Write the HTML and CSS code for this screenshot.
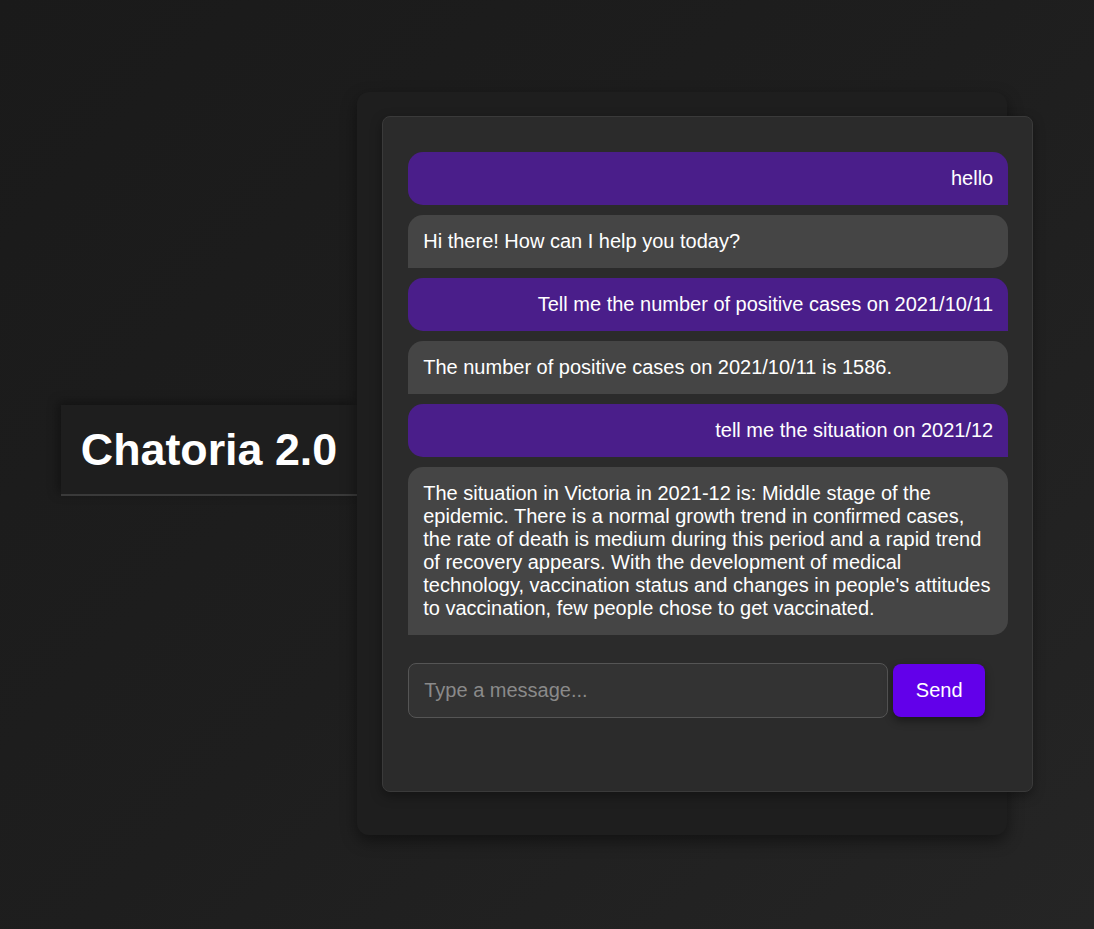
FILE: index.html
```html
<!DOCTYPE html>
<html lang="en">
<head>
<meta charset="utf-8">
<title>Chatoria 2.0</title>
<link rel="stylesheet" href="styles.css">
</head>
<body>
<div class="layout">
  <div class="title-box">
    <h1 class="title">Chatoria 2.0</h1>
  </div>
  <div class="panel">
    <div class="chat-card">
      <div class="messages">
        <div class="msg user">hello</div>
        <div class="msg bot">Hi there! How can I help you today?</div>
        <div class="msg user">Tell me the number of positive cases on 2021/10/11</div>
        <div class="msg bot">The number of positive cases on 2021/10/11 is 1586.</div>
        <div class="msg user">tell me the situation on 2021/12</div>
        <div class="msg bot">The situation in Victoria in 2021-12 is: Middle stage of the epidemic. There is a normal growth trend in confirmed cases, the rate of death is medium during this period and a rapid trend of recovery appears. With the development of medical technology, vaccination status and changes in people's attitudes to vaccination, few people chose to get vaccinated.</div>
      </div>
      <div class="input-row">
        <input class="msg-input" type="text" placeholder="Type a message...">
        <button class="send-btn" type="button">Send</button>
      </div>
    </div>
  </div>
</div>
</body>
</html>
```
FILE: styles.css
```css
* { box-sizing: border-box; }

html, body {
  margin: 0;
  padding: 0;
}

body {
  min-height: 100vh;
  background: linear-gradient(135deg, #1a1a1a 0%, #1e1e1e 50%, #252525 100%);
  font-family: "Liberation Sans", Arial, sans-serif;
  color: #fff;
  display: flex;
  justify-content: center;
  align-items: center;
}

.layout {
  display: flex;
  align-items: center;
  margin-top: -2px;
}

.title-box {
  background: #1e1e1e;
  padding: 19px 20px;
  border-bottom: 2px solid #3a3a3a;
  box-shadow: -3px -3px 10px rgba(0, 0, 0, 0.35);
  margin-bottom: 26px;
}

.title {
  margin: 0;
  font-size: 44.8px;
  font-weight: bold;
  line-height: normal;
  color: #fff;
  white-space: nowrap;
}

.panel {
  width: 650px;
  background: #1e1e1e;
  border-radius: 12px;
  padding: 24px 0 43px 25px;
  margin-right: 26px;
  box-shadow: 0 6px 16px rgba(0, 0, 0, 0.45);
}

.chat-card {
  width: 651px;
  background: #2b2b2b;
  border: 1px solid #3a3a3a;
  border-radius: 8px;
  padding: 35px 24px 73px 25px;
  box-shadow: 0 4px 12px rgba(0, 0, 0, 0.35);
}

.messages {
  display: flex;
  flex-direction: column;
  gap: 10px;
}

.msg {
  width: 600px;
  padding: 15px;
  font-size: 20px;
  line-height: 23px;
  color: #fff;
}

.msg.user {
  background: #4a1e8a;
  text-align: right;
  border-radius: 15px 15px 0 15px;
}

.msg.bot {
  background: #454545;
  text-align: left;
  border-radius: 15px 15px 15px 0;
}

.input-row {
  display: flex;
  align-items: center;
  margin-top: 28px;
}

.msg-input {
  width: 480px;
  height: 55px;
  padding: 15px;
  background: #333;
  border: 1px solid #555;
  border-radius: 8px;
  color: #fff;
  font-family: "Liberation Sans", Arial, sans-serif;
  font-size: 20px;
  outline: none;
}

.msg-input::placeholder {
  color: #8a8a8a;
}

.send-btn {
  width: 92px;
  height: 53px;
  margin-left: 5px;
  background: #6200ea;
  color: #fff;
  border: none;
  border-radius: 8px;
  font-family: "Liberation Sans", Arial, sans-serif;
  font-size: 20px;
  box-shadow: 0 4px 8px rgba(0, 0, 0, 0.4);
  cursor: pointer;
}
```
